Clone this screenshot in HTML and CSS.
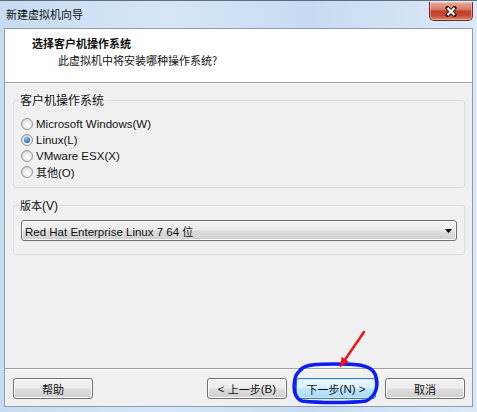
FILE: index.html
```html
<!DOCTYPE html>
<html>
<head>
<meta charset="utf-8">
<link rel="stylesheet" href="styles.css">
</head>
<body>
<div class="window">
  <div class="titlebar">
    <span class="title cjk">新建虚拟机向导</span>
    <div class="close">
      <svg width="14" height="11" viewBox="0 0 14 11"><path d="M3.5 2 L10.5 9 M10.5 2 L3.5 9" stroke="#3b1a14" stroke-width="4.2" stroke-linecap="round"/><path d="M3.5 2 L10.5 9 M10.5 2 L3.5 9" stroke="#fff" stroke-width="2.2"/></svg>
    </div>
  </div>
  <div class="client">
    <div class="header">
      <div class="h-title cjk">选择客户机操作系统</div>
      <div class="h-sub cjk">此虚拟机中将安装哪种操作系统?</div>
    </div>
    <div class="body">
      <fieldset class="group g-os">
        <legend class="cjk">客户机操作系统</legend>
        <div class="radio-row"><span class="radio"></span><span>Microsoft Windows(W)</span></div>
        <div class="radio-row"><span class="radio on"></span><span>Linux(L)</span></div>
        <div class="radio-row"><span class="radio"></span><span>VMware ESX(X)</span></div>
        <div class="radio-row"><span class="radio"></span><span><span class="cjk">其他</span>(O)</span></div>
      </fieldset>
      <fieldset class="group g-ver">
        <legend><span class="cjk">版本</span>(V)</legend>
        <div class="select">
          <span>Red Hat Enterprise Linux 7 64 <span class="cjk">位</span></span>
          <svg class="arrow" width="7" height="4" viewBox="0 0 7 4"><path d="M0 0 H7 L3.5 4 Z" fill="#000"/></svg>
        </div>
      </fieldset>
      <div class="footer">
        <div class="buttons">
          <div class="btn"><span class="cjk">帮助</span></div>
          <div class="spacer"></div>
          <div class="btn">&lt;&nbsp;<span class="cjk">上一步</span>(B)</div>
          <div class="btn default"><span class="cjk">下一步</span>(N)&nbsp;&gt;</div>
          <div class="btn"><span class="cjk">取消</span></div>
        </div>
      </div>
    </div>
  </div>
  <div class="bottom-frame"></div>
  <svg class="annot" width="477" height="412" viewBox="0 0 477 412">
    <path d="M300 370 C 306 364, 318 364, 334 364 C 356 364, 370 364, 375 374 C 379 384, 377 396, 366 401 C 350 403, 320 403, 302 401 C 294 398, 293 388, 295 379 C 296 374, 298 372, 303 368" fill="none" stroke="#0c1ef0" stroke-width="3.5" stroke-linecap="round"/>
    <line x1="364" y1="332" x2="345.5" y2="359" stroke="#f01414" stroke-width="2.5" stroke-linecap="round"/>
    <path d="M340 367.5 L348.8 361.8 L341.6 356.8 Z" fill="#f01414"/>
  </svg>
</div>
</body>
</html>
```

FILE: styles.css
```css
* { box-sizing: border-box; }
html, body { margin: 0; padding: 0; }
body {
  width: 477px;
  height: 412px;
  overflow: hidden;
  font-family: "Liberation Sans", "Noto Sans CJK SC", sans-serif;
  font-size: 11.5px;
  color: #111;
}
.cjk {
  font-family: "Noto Sans CJK SC", sans-serif;
  font-size: 11px;
}
.window {
  position: relative;
  width: 477px;
  height: 412px;
  display: flex;
  flex-direction: column;
  background: linear-gradient(to right, #c7dbf1 0%, #d6e6f8 35%, #c6dbf2 65%, #dce9f9 100%);
}
.titlebar {
  height: 28px;
  border-top: 1px solid #5f6d7e;
  display: flex;
  align-items: flex-start;
  justify-content: space-between;
  padding: 0 4px 0 6px;
}
.title {
  line-height: 15px;
  margin-top: 6px;
}
.close {
  width: 44px;
  height: 19px;
  margin-top: 1px;
  border: 1px solid #6b2a22;
  border-top: none;
  border-radius: 0 0 5px 5px;
  background: linear-gradient(#e8ada0 0%, #d87a66 40%, #c23f2c 52%, #c34b33 75%, #e08a68 100%);
  box-shadow: inset 0 0 0 1px rgba(255, 220, 210, 0.45);
  display: flex;
  align-items: center;
  justify-content: center;
}
.client {
  margin: 0 4px;
  height: 379px;
  border: 1px solid #8c9db1;
  background: #f0f0f0;
  display: flex;
  flex-direction: column;
}
.header {
  height: 54px;
  flex: none;
  background: #fff;
  border-bottom: 1px solid #a0a0a0;
  padding: 7px 0 0 27px;
}
.h-title {
  font-weight: bold;
  line-height: 15px;
}
.h-sub {
  line-height: 15px;
  margin: 2px 0 0 26px;
}
.body {
  flex: 1;
  border-top: 1px solid #fff;
  display: flex;
  flex-direction: column;
}
.group {
  margin: 9px 7px 0 8px;
  padding: 9px 7px 7px 5px;
  border: 1px solid #d5dfe5;
  border-radius: 3px;
  min-width: 0;
}
.group legend {
  padding: 0 1px;
  line-height: 14px;
  font-size: 12px;
}
.g-ver {
  margin-top: 10px;
  padding-top: 7px;
  padding-bottom: 13px;
}
.radio-row {
  height: 16px;
  display: flex;
  align-items: center;
  margin-left: 2px;
}
.radio {
  width: 12px;
  height: 12px;
  flex: none;
  border-radius: 50%;
  border: 1px solid #929292;
  background: radial-gradient(circle at 60% 65%, #ffffff 0%, #f2f2f2 35%, #d2d2d2 85%);
  margin-right: 3px;
  display: flex;
  align-items: center;
  justify-content: center;
}
.radio.on::after {
  content: "";
  width: 6px;
  height: 6px;
  border-radius: 50%;
  background: radial-gradient(circle at 40% 35%, #9ccdf6 0%, #3677c9 55%, #163d78 100%);
}
.select {
  height: 21px;
  margin-left: 2px;
  border: 1px solid #707070;
  border-radius: 3px;
  background: linear-gradient(#f3f3f3 0%, #ebebeb 48%, #dddddd 52%, #cfcfcf 100%);
  box-shadow: inset 0 0 0 1px #fbfbfb;
  display: flex;
  align-items: center;
  justify-content: space-between;
  padding: 0 4px 0 3px;
}
.footer {
  margin-top: auto;
  border-top: 1px solid #a0a0a0;
}
.buttons {
  border-top: 1px solid #fff;
  padding: 8px 7px 7px 8px;
  display: flex;
  gap: 9px;
}
.spacer { flex: 1; }
.btn {
  width: 80px;
  height: 21px;
  border: 1px solid #707070;
  border-radius: 3px;
  background: linear-gradient(#f3f3f3 0%, #ebebeb 48%, #dddddd 52%, #cfcfcf 100%);
  box-shadow: inset 0 0 0 1px #fcfcfc;
  display: flex;
  align-items: center;
  justify-content: center;
  font-size: 11.5px;
}
.btn.default {
  border-color: #3c7fb1;
  background: linear-gradient(#eaf6fd 0%, #d9f0fc 48%, #bee6fd 52%, #a7d9f5 100%);
  box-shadow: inset 0 0 0 1px #c8eaff;
}
.bottom-frame {
  flex: 1;
}
.annot {
  position: absolute;
  left: 0;
  top: 0;
  pointer-events: none;
}
```
